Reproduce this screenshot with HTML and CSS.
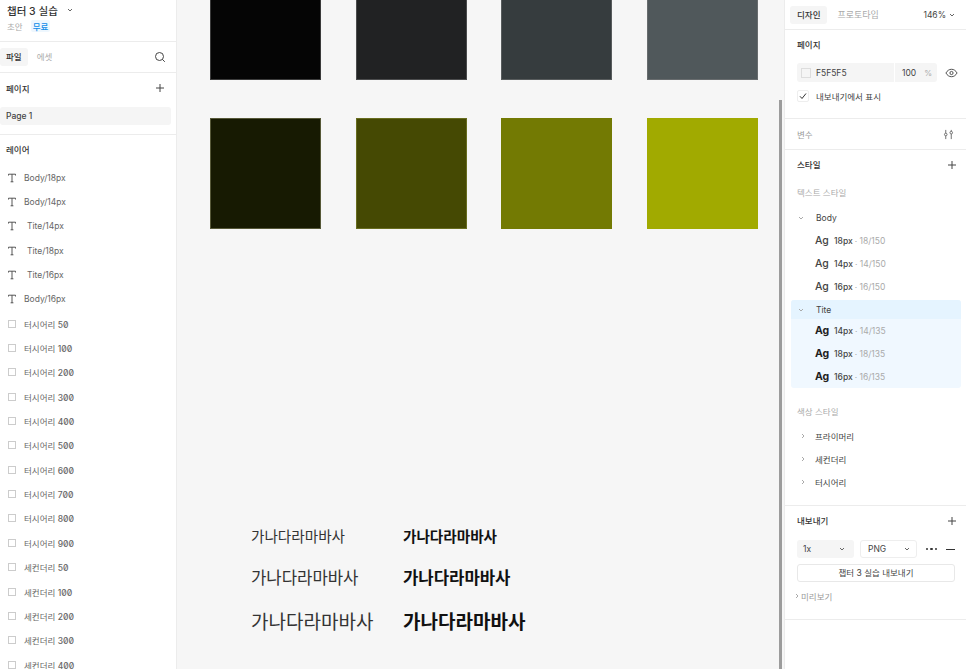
FILE: index.html
```html
<!DOCTYPE html>
<html lang="ko">
<head>
<meta charset="utf-8">
<title>챕터 3 실습</title>
<link rel="stylesheet" href="styles.css">
</head>
<body>
<div class="app">
  <aside class="left">
    <header class="file-head">
      <div class="file-title"><span>챕터 3 실습</span><svg class="chev-s" viewBox="0 0 8 8"><path d="M2 3l2 2 2-2"/></svg></div>
      <div class="file-sub"><span>초안</span><span class="free">무료</span></div>
    </header>
    <div class="tabs-row">
      <span class="tab on">파일</span><span class="tab">에셋</span>
      <svg class="ico search" viewBox="0 0 12 12"><circle cx="5.5" cy="5.5" r="4"/><path d="M8.4 8.4l2.4 2.4"/></svg>
    </div>
    <section class="pages">
      <div class="sec-head"><b>페이지</b><svg class="ico plus" viewBox="0 0 10 10"><path d="M5 1v8M1 5h8"/></svg></div>
      <div class="page-row">Page 1</div>
    </section>
    <section class="layers">
      <div class="layers-title"><b>레이어</b></div>
      <div class="layer"><svg class="t" viewBox="0 0 10 10"><path d="M1.500 2.500V1.200h7v1.300M5 1.200v7.600M3.600 8.800h2.800"/></svg><span>Body/18px</span></div>
      <div class="layer"><svg class="t" viewBox="0 0 10 10"><path d="M1.500 2.500V1.200h7v1.300M5 1.200v7.600M3.600 8.800h2.800"/></svg><span>Body/14px</span></div>
      <div class="layer in"><svg class="t" viewBox="0 0 10 10"><path d="M1.500 2.500V1.200h7v1.300M5 1.200v7.600M3.600 8.800h2.800"/></svg><span>Tite/14px</span></div>
      <div class="layer in"><svg class="t" viewBox="0 0 10 10"><path d="M1.500 2.500V1.200h7v1.300M5 1.200v7.600M3.600 8.800h2.800"/></svg><span>Tite/18px</span></div>
      <div class="layer in"><svg class="t" viewBox="0 0 10 10"><path d="M1.500 2.500V1.200h7v1.300M5 1.200v7.600M3.600 8.800h2.800"/></svg><span>Tite/16px</span></div>
      <div class="layer"><svg class="t" viewBox="0 0 10 10"><path d="M1.500 2.500V1.200h7v1.300M5 1.200v7.600M3.600 8.800h2.800"/></svg><span>Body/16px</span></div>
      <div class="layer"><i class="box"></i><span>터시어리 <em>50</em></span></div>
      <div class="layer"><i class="box"></i><span>터시어리 <em>100</em></span></div>
      <div class="layer"><i class="box"></i><span>터시어리 <em>200</em></span></div>
      <div class="layer"><i class="box"></i><span>터시어리 <em>300</em></span></div>
      <div class="layer"><i class="box"></i><span>터시어리 <em>400</em></span></div>
      <div class="layer"><i class="box"></i><span>터시어리 <em>500</em></span></div>
      <div class="layer"><i class="box"></i><span>터시어리 <em>600</em></span></div>
      <div class="layer"><i class="box"></i><span>터시어리 <em>700</em></span></div>
      <div class="layer"><i class="box"></i><span>터시어리 <em>800</em></span></div>
      <div class="layer"><i class="box"></i><span>터시어리 <em>900</em></span></div>
      <div class="layer"><i class="box"></i><span>세컨더리 <em>50</em></span></div>
      <div class="layer"><i class="box"></i><span>세컨더리 <em>100</em></span></div>
      <div class="layer"><i class="box"></i><span>세컨더리 <em>200</em></span></div>
      <div class="layer"><i class="box"></i><span>세컨더리 <em>300</em></span></div>
      <div class="layer"><i class="box"></i><span>세컨더리 <em>400</em></span></div>
    </section>
  </aside>

  <main class="canvas">
    <div class="swatches">
      <div class="sw c1"></div><div class="sw c2"></div><div class="sw c3"></div><div class="sw c4"></div>
      <div class="sw c5"></div><div class="sw c6"></div><div class="sw c7"></div><div class="sw c8"></div>
    </div>
    <div class="samples">
      <div class="sample s14"><span>가나다라마바사</span><strong>가나다라마바사</strong></div>
      <div class="sample s16"><span>가나다라마바사</span><strong>가나다라마바사</strong></div>
      <div class="sample s18"><span>가나다라마바사</span><strong>가나다라마바사</strong></div>
    </div>
    <div class="scrollbar"></div>
  </main>

  <aside class="right">
    <div class="r-tabs">
      <span class="r-tab on">디자인</span><span class="r-tab proto">프로토타입</span>
      <span class="zoom">146%<svg class="chev-s" viewBox="0 0 8 8"><path d="M2 3l2 2 2-2"/></svg></span>
    </div>
    <section class="r-page">
      <div class="r-title">페이지</div>
      <div class="fill-row">
        <div class="fill"><span class="fill-color"><i class="chip"></i>F5F5F5</span><span class="fill-op">100<small>%</small></span></div>
        <svg class="ico eye" viewBox="0 0 14 10"><path d="M1 5c1.500-2.600 3.500-4 6-4s4.500 1.400 6 4c-1.500 2.600-3.500 4-6 4S2.500 7.600 1 5z"/><circle cx="7" cy="5" r="1.700"/></svg>
      </div>
      <label class="check"><span class="cbox"><svg viewBox="0 0 10 10"><path d="M2 5.300l2 2.200L8 2.500"/></svg></span>내보내기에서 표시</label>
    </section>
    <section class="r-vars">
      <span>변수</span>
      <svg class="ico sliders" viewBox="0 0 12 12"><path d="M3 1v3.500M3 7.500V11M9 1v1.500M9 5.500V11"/><circle cx="3" cy="6" r="1.400"/><circle cx="9" cy="4" r="1.400"/></svg>
    </section>
    <section class="r-styles">
      <div class="r-title split">스타일<svg class="ico plus" viewBox="0 0 10 10"><path d="M5 1v8M1 5h8"/></svg></div>
      <div class="sub-title text-t">텍스트 스타일</div>
      <div class="group-row body-g"><svg class="chev-g" viewBox="0 0 8 8"><path d="M2 3l2 2 2-2"/></svg>Body</div>
      <div class="st"><span class="ag">Ag</span><span class="nm">18px</span><span class="mt">· 18/150</span></div>
      <div class="st"><span class="ag">Ag</span><span class="nm">14px</span><span class="mt">· 14/150</span></div>
      <div class="st"><span class="ag">Ag</span><span class="nm">16px</span><span class="mt">· 16/150</span></div>
      <div class="sel">
        <div class="group-row sel-h"><svg class="chev-g" viewBox="0 0 8 8"><path d="M2 3l2 2 2-2"/></svg>Tite</div>
        <div class="st"><span class="ag b">Ag</span><span class="nm">14px</span><span class="mt">· 14/135</span></div>
        <div class="st"><span class="ag b">Ag</span><span class="nm">18px</span><span class="mt">· 18/135</span></div>
        <div class="st"><span class="ag b">Ag</span><span class="nm">16px</span><span class="mt">· 16/135</span></div>
      </div>
      <div class="sub-title color-t">색상 스타일</div>
      <div class="group-row col"><svg class="chev-g" viewBox="0 0 8 8"><path d="M3 2l2 2-2 2"/></svg>프라이머리</div>
      <div class="group-row col"><svg class="chev-g" viewBox="0 0 8 8"><path d="M3 2l2 2-2 2"/></svg>세컨더리</div>
      <div class="group-row col"><svg class="chev-g" viewBox="0 0 8 8"><path d="M3 2l2 2-2 2"/></svg>터시어리</div>
    </section>
    <section class="r-export">
      <div class="r-title split">내보내기<svg class="ico plus" viewBox="0 0 10 10"><path d="M5 1v8M1 5h8"/></svg></div>
      <div class="exp-row">
        <span class="scale"><span>1x</span><svg class="chev-s" viewBox="0 0 8 8"><path d="M2 3l2 2 2-2"/></svg></span>
        <span class="fmt">PNG<svg class="chev-s" viewBox="0 0 8 8"><path d="M2 3l2 2 2-2"/></svg></span>
        <span class="dots"><i></i><i></i><i></i></span>
        <span class="minus"></span>
      </div>
      <div class="exp-btn">챕터 3 실습 내보내기</div>
      <div class="preview"><svg class="chev-g" viewBox="0 0 8 8"><path d="M3 2l2 2-2 2"/></svg>미리보기</div>
    </section>
  </aside>
</div>
</body>
</html>
```
FILE: styles.css
```css
* { box-sizing: border-box; }
html, body { margin: 0; height: 100%; overflow: hidden; }
body {
  font-family: Inter, "Noto Sans CJK KR", sans-serif;
  font-size: 8.5px;
  color: #444;
  background: #f6f6f6;
}
b { font-weight: 500; color: #333; }
svg { display: block; flex: none; }
.ico { fill: none; stroke: #444; stroke-width: 1; }
.chev-s, .chev-g { width: 8px; height: 8px; fill: none; stroke: #666; stroke-width: 1; }
.chev-g { stroke: #aaa; }

.app { display: grid; grid-template-columns: 177px 1fr 182px; height: 669px; }

/* left panel */
.left { background: #fff; border-right: 1px solid #ececec; overflow: hidden; }
.file-head { height: 42px; padding: 4px 0 0 7px; border-bottom: 1px solid #ececec; }
.file-title { display: flex; align-items: center; gap: 8px; height: 12px; font-size: 10.500px; font-weight: 500; color: #333; }
.file-sub { display: flex; align-items: center; gap: 8px; margin-top: 4px; font-size: 8.500px; color: #aaa; height: 12px; }
.free { color: #0d8ce9; background: #eef7fe; padding: 0 2px; border-radius: 2px; font-weight: 500; }
.tabs-row { display: flex; align-items: center; height: 31px; padding: 0 10px 0 0; border-bottom: 1px solid #ececec; font-size: 8.500px; }
.tab { padding: 0 6px; height: 18px; line-height: 18px; color: #aaa; border-radius: 3px; margin-right: 4px; }
.tab.on { background: #f5f5f5; color: #333; font-weight: 500; margin-right: 3px; }
.search { width: 12px; height: 12px; margin-left: auto; }
.pages { height: 62px; border-bottom: 1px solid #ececec; }
.sec-head { display: flex; justify-content: space-between; align-items: center; height: 30px; margin-bottom: 4px; padding: 0 11px 0 6px; font-size: 8.500px; }
.plus { width: 10px; height: 10px; }
.page-row { height: 18px; line-height: 18px; width: 171px; padding-left: 6px; background: #f5f5f5; border-radius: 3px; font-weight: 500; }
.layers-title { height: 30.500px; padding: 8px 0 0 6px; font-size: 8.500px; }
.layer { display: flex; align-items: center; height: 24.350px; padding-left: 7px; gap: 7px; color: #666; }
.layer.in span { margin-left: 3px; }
.t { width: 10px; height: 10px; fill: none; stroke: #444; stroke-width: .9; }
.box { width: 8px; height: 8px; margin: 0 1px; border: 1px solid #ccc; display: block; flex: none; }
.layer em { font-style: normal; font-weight: 500; font-feature-settings: "zero"; }

/* canvas */
.canvas { position: relative; overflow: hidden; background: #f6f6f6; padding-left: 33px; }
.swatches { display: grid; grid-template-columns: repeat(4, 111px); grid-auto-rows: 111px; gap: 38px 34.670px; margin-top: -31px; }
.sw { border: 1px solid rgba(140,140,140,.4); }
.c1 { background: #050505; }
.c2 { background: #212223; }
.c3 { background: #363c3e; }
.c4 { background: #50585b; }
.c5 { background: #171a02; border-color: rgba(150,150,110,.5); }
.c6 { background: #454903; border-color: rgba(140,145,60,.5); }
.c7 { background: #737a03; border-color: #737a03; }
.c8 { background: #a1aa00; border-color: #a1aa00; }
.samples { margin: 294px 0 0 41px; color: #333; }
.sample { display: grid; grid-template-columns: 152px auto; align-items: center; }
.sample strong { color: #111; font-weight: 700; }
.s14 { height: 24px; font-size: 14.600px; }
.s16 { height: 28px; margin-top: 16px; font-size: 16.700px; }
.s18 { height: 30px; margin-top: 14px; font-size: 19px; }
.scrollbar { position: absolute; top: 100px; right: 2px; bottom: 0; width: 3px; background: #9c9c9c; }

/* right panel */
.right { background: #fff; border-left: 1px solid #ececec; overflow: hidden; }
.r-tabs { display: flex; align-items: center; height: 30px; padding: 0 10px 0 5px; border-bottom: 1px solid #ececec; font-size: 8.500px; }
.r-tab { height: 18px; line-height: 18px; padding: 0 7px; color: #aaa; border-radius: 3px; margin-right: 3px; }
.r-tab.on { background: #f5f5f5; color: #333; font-weight: 500; }
.proto { font-size: 9px; }
.zoom { display: flex; align-items: center; gap: 2px; margin-left: auto; color: #444; }
.r-page { height: 89px; padding: 0 0 0 12px; border-bottom: 1px solid #ececec; }
.r-title { font-size: 8.500px; font-weight: 500; color: #333; padding-top: 8px; height: 33px; }
.split { display: flex; justify-content: space-between; padding-right: 9px; align-items: flex-start; }
.split svg { margin-top: 2px; }
.fill-row { display: flex; align-items: center; }
.fill { display: flex; width: 140px; height: 19px; background: #f5f5f5; border-radius: 3px; align-items: center; }
.fill-color { display: flex; align-items: center; gap: 5px; width: 98px; padding-left: 4px; height: 19px; border-right: 1px solid #fff; }
.chip { width: 10px; height: 10px; background: #f5f5f5; border: 1px solid #ddd; display: block; }
.fill-op { padding-left: 7px; }
.fill-op small { font-size: 8px; color: #aaa; margin-left: 8px; }
.eye { width: 13px; height: 10px; margin-left: 8px; }
.check { display: flex; align-items: center; gap: 7px; margin-top: 5px; height: 18px; font-size: 8.500px; color: #444; }
.cbox { width: 12px; height: 12px; border: 1px solid #eee; border-radius: 2px; }
.cbox svg { width: 10px; height: 10px; fill: none; stroke: #333; stroke-width: 1; }
.r-vars { display: flex; justify-content: space-between; align-items: center; height: 31px; padding: 0 12px; border-bottom: 1px solid #ececec; color: #999; }
.sliders { width: 11px; height: 11px; stroke: #666; }
.r-styles { height: 356px; border-bottom: 1px solid #ececec; padding-left: 6px; }
.r-styles .r-title { padding-left: 6px; height: 37px; }
.sub-title { padding-left: 6px; color: #aaa; font-size: 8.500px; height: 12px; line-height: 12px; }
.text-t { margin-bottom: 9px; }
.group-row { display: flex; align-items: center; gap: 11px; height: 19px; padding-left: 6px; color: #444; }
.body-g { margin-bottom: 2px; }
.st { display: flex; align-items: center; height: 23px; padding-left: 24px; font-size: 8.500px; }
.ag { font-size: 10.500px; width: 19px; color: #444; font-weight: 500; }
.ag.b { font-weight: 700; color: #222; }
.nm { color: #444; font-weight: 500; margin-right: 2px; }
.mt { color: #aaa; }
.sel { width: 170px; height: 88px; background: #f0f8ff; border-radius: 3px; margin-top: 2px; }
.sel-h { background: #e5f4ff; height: 19px; border-radius: 3px 3px 0 0; }
.color-t { margin: 18px 0 6px; }
.col { height: 23px; padding-left: 8px; gap: 8px; }
.r-export { height: 114px; padding: 0 0 0 12px; border-bottom: 1px solid #ececec; }
.r-export .r-title { height: 34px; }
.exp-row { display: flex; align-items: center; height: 18px; }
.scale { display: flex; width: 57px; height: 18px; background: #f5f5f5; border-radius: 3px; align-items: center; }
.scale span { width: 38px; padding-left: 6px; }
.scale svg { margin-left: 3px; }
.fmt { display: flex; align-items: center; justify-content: space-between; width: 57px; height: 18px; margin-left: 6px; padding: 0 5px 0 7px; border: 1px solid #eee; border-radius: 3px; }
.dots { display: flex; gap: 2px; margin-left: 9px; }
.dots i { display: block; width: 2.300px; height: 2.300px; background: #333; border-radius: 50%; }
.minus { display: block; width: 9px; height: 1px; background: #333; margin-left: 9px; }
.exp-btn { width: 158px; height: 18px; margin-top: 6px; line-height: 16px; text-align: center; border: 1px solid #e8e8e8; border-radius: 3px; color: #444; }
.preview { display: flex; align-items: center; margin: 7px 0 0 -4px; height: 14px; color: #999; }
```
